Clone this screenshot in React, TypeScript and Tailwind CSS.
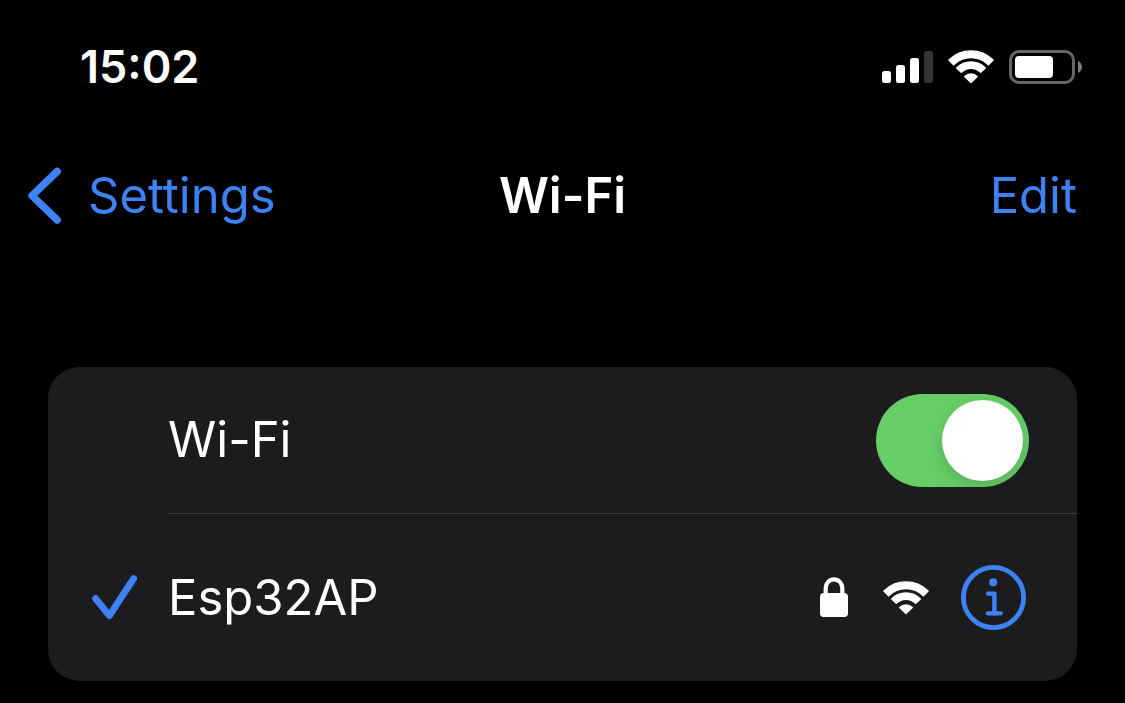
import { useState } from "react";

function WifiIcon({ label }: { label: string }) {
  return (
    <svg role="img" aria-label={label} viewBox="0 0 46 34" className="h-[34px] w-[46px] shrink-0" fill="currentColor" stroke="currentColor" strokeWidth="1.4" strokeLinejoin="round">
      <path d="M0.9 10 A31.4 31.4 0 0 1 45.1 10 L40.4 14.7 A24.6 24.6 0 0 0 5.6 14.7 Z" />
      <path d="M8.7 18 A20.2 20.2 0 0 1 37.3 18 L32.7 22.3 A13.8 13.8 0 0 0 13.3 22.3 Z" />
      <path d="M16.7 26.4 A9.3 9.3 0 0 1 29.3 26.4 L23 32.5 Z" />
    </svg>
  );
}

function SignalIcon() {
  return (
    <svg role="img" aria-label="Cellular signal" viewBox="0 0 51 34" className="h-[34px] w-[51px] shrink-0" fill="currentColor">
      <rect x="0" y="21" width="9" height="12" rx="2.5" />
      <rect x="14" y="15" width="9" height="18" rx="2.5" />
      <rect x="28" y="8" width="9" height="25" rx="2.5" />
      <rect x="42" y="1" width="9" height="32" rx="2.5" fill="#343434" />
    </svg>
  );
}

function BatteryIcon() {
  return (
    <svg role="img" aria-label="Battery" viewBox="0 0 73 34" className="h-[34px] w-[73px] shrink-0">
      <rect x="1.5" y="1.5" width="63" height="31" rx="8.5" fill="none" stroke="#666666" strokeWidth="3" />
      <rect x="6" y="6" width="38" height="22" rx="4" fill="white" />
      <path d="M69 11 C74.3 13 74.3 21 69 23 Z" fill="#7b7b7b" />
    </svg>
  );
}

function ChevronIcon() {
  return (
    <svg aria-hidden="true" viewBox="0 0 34 58" className="h-[58px] w-[34px] shrink-0" fill="none" stroke="currentColor" strokeWidth="7.4" strokeLinecap="round" strokeLinejoin="round">
      <path d="M29.2 4.5 L4 28.7 L29.2 53" />
    </svg>
  );
}

function CheckIcon() {
  return (
    <svg role="img" aria-label="Connected" viewBox="0 0 46 46" className="h-[46px] w-[46px] shrink-0" fill="none" stroke="currentColor" strokeWidth="6.8" strokeLinecap="round" strokeLinejoin="round">
      <path d="M3.6 23.7 L17.4 40.7 L41.6 3.6" />
    </svg>
  );
}

function LockIcon() {
  return (
    <svg role="img" aria-label="Secured" viewBox="0 0 28 42" className="h-[42px] w-7 shrink-0">
      <path d="M5.7 20 V11 A8.3 8.7 0 0 1 22.3 11 V20" fill="none" stroke="currentColor" strokeWidth="4.2" />
      <rect x="0" y="16" width="28" height="24" rx="3.8" fill="currentColor" />
    </svg>
  );
}

function InfoIcon() {
  return (
    <svg aria-hidden="true" viewBox="0 0 65 65" className="h-[65px] w-[65px]" fill="none" stroke="currentColor" strokeLinecap="round" strokeLinejoin="round">
      <circle cx="32.5" cy="32.5" r="30.1" strokeWidth="4.8" />
      <circle cx="32.2" cy="17.2" r="4" fill="currentColor" stroke="none" />
      <path d="M27 28.6 H33.4 V48.3" strokeWidth="4.4" />
      <path d="M26.7 48.3 H39.8" strokeWidth="4.2" />
    </svg>
  );
}

export default function App() {
  const [enabled, setEnabled] = useState(true);

  return (
    <div className="min-h-screen bg-black pb-5 font-['Inter',sans-serif] text-[49px] leading-[60px] text-white">
      <header>
        <div className="flex h-[134px] items-center justify-between pr-[43px] pl-20">
          <time className="text-[45px] font-semibold">15:02</time>
          <div className="flex items-center gap-[15px]">
            <SignalIcon />
            <WifiIcon label="Wi-Fi signal" />
            <BatteryIcon />
          </div>
        </div>
        <nav className="grid h-[123px] grid-cols-[1fr_auto_1fr] items-center px-7 text-[#3e82f7]">
          <a href="#settings" className="flex items-center gap-[26px] justify-self-start">
            <ChevronIcon />
            Settings
          </a>
          <h1 className="font-semibold text-white">Wi-Fi</h1>
          <button type="button" className="justify-self-end pr-5">Edit</button>
        </nav>
      </header>

      <main className="mx-12 mt-[110px] overflow-hidden rounded-[32px] bg-[#1c1c1e]">
        <div className="ml-[120px] flex h-[147px] items-center justify-between border-b border-[#3d3d40] pr-12">
          <label htmlFor="wifi">Wi-Fi</label>
          <input
            id="wifi"
            type="checkbox"
            role="switch"
            checked={enabled}
            onChange={(event) => setEnabled(event.target.checked)}
            className="flex h-[93px] w-[153px] cursor-pointer appearance-none items-center overflow-hidden rounded-full bg-[#39393d] px-1.5 before:size-[81px] before:rounded-full before:bg-white before:shadow-[0_6px_16px_rgba(0,0,0,0.15)] checked:justify-end checked:bg-[#67ce67]"
          />
        </div>
        <div className="flex h-[167px] items-center pr-[51px] pl-11">
          <span className="flex w-[76px] text-[#3e82f7]">
            <CheckIcon />
          </span>
          <span>Esp32AP</span>
          <div className="ml-auto flex items-center">
            <LockIcon />
            <span className="mr-8 ml-[35px]">
              <WifiIcon label="Network strength" />
            </span>
            <button type="button" aria-label="Network details" className="text-[#3e82f7]">
              <InfoIcon />
            </button>
          </div>
        </div>
      </main>
    </div>
  );
}
